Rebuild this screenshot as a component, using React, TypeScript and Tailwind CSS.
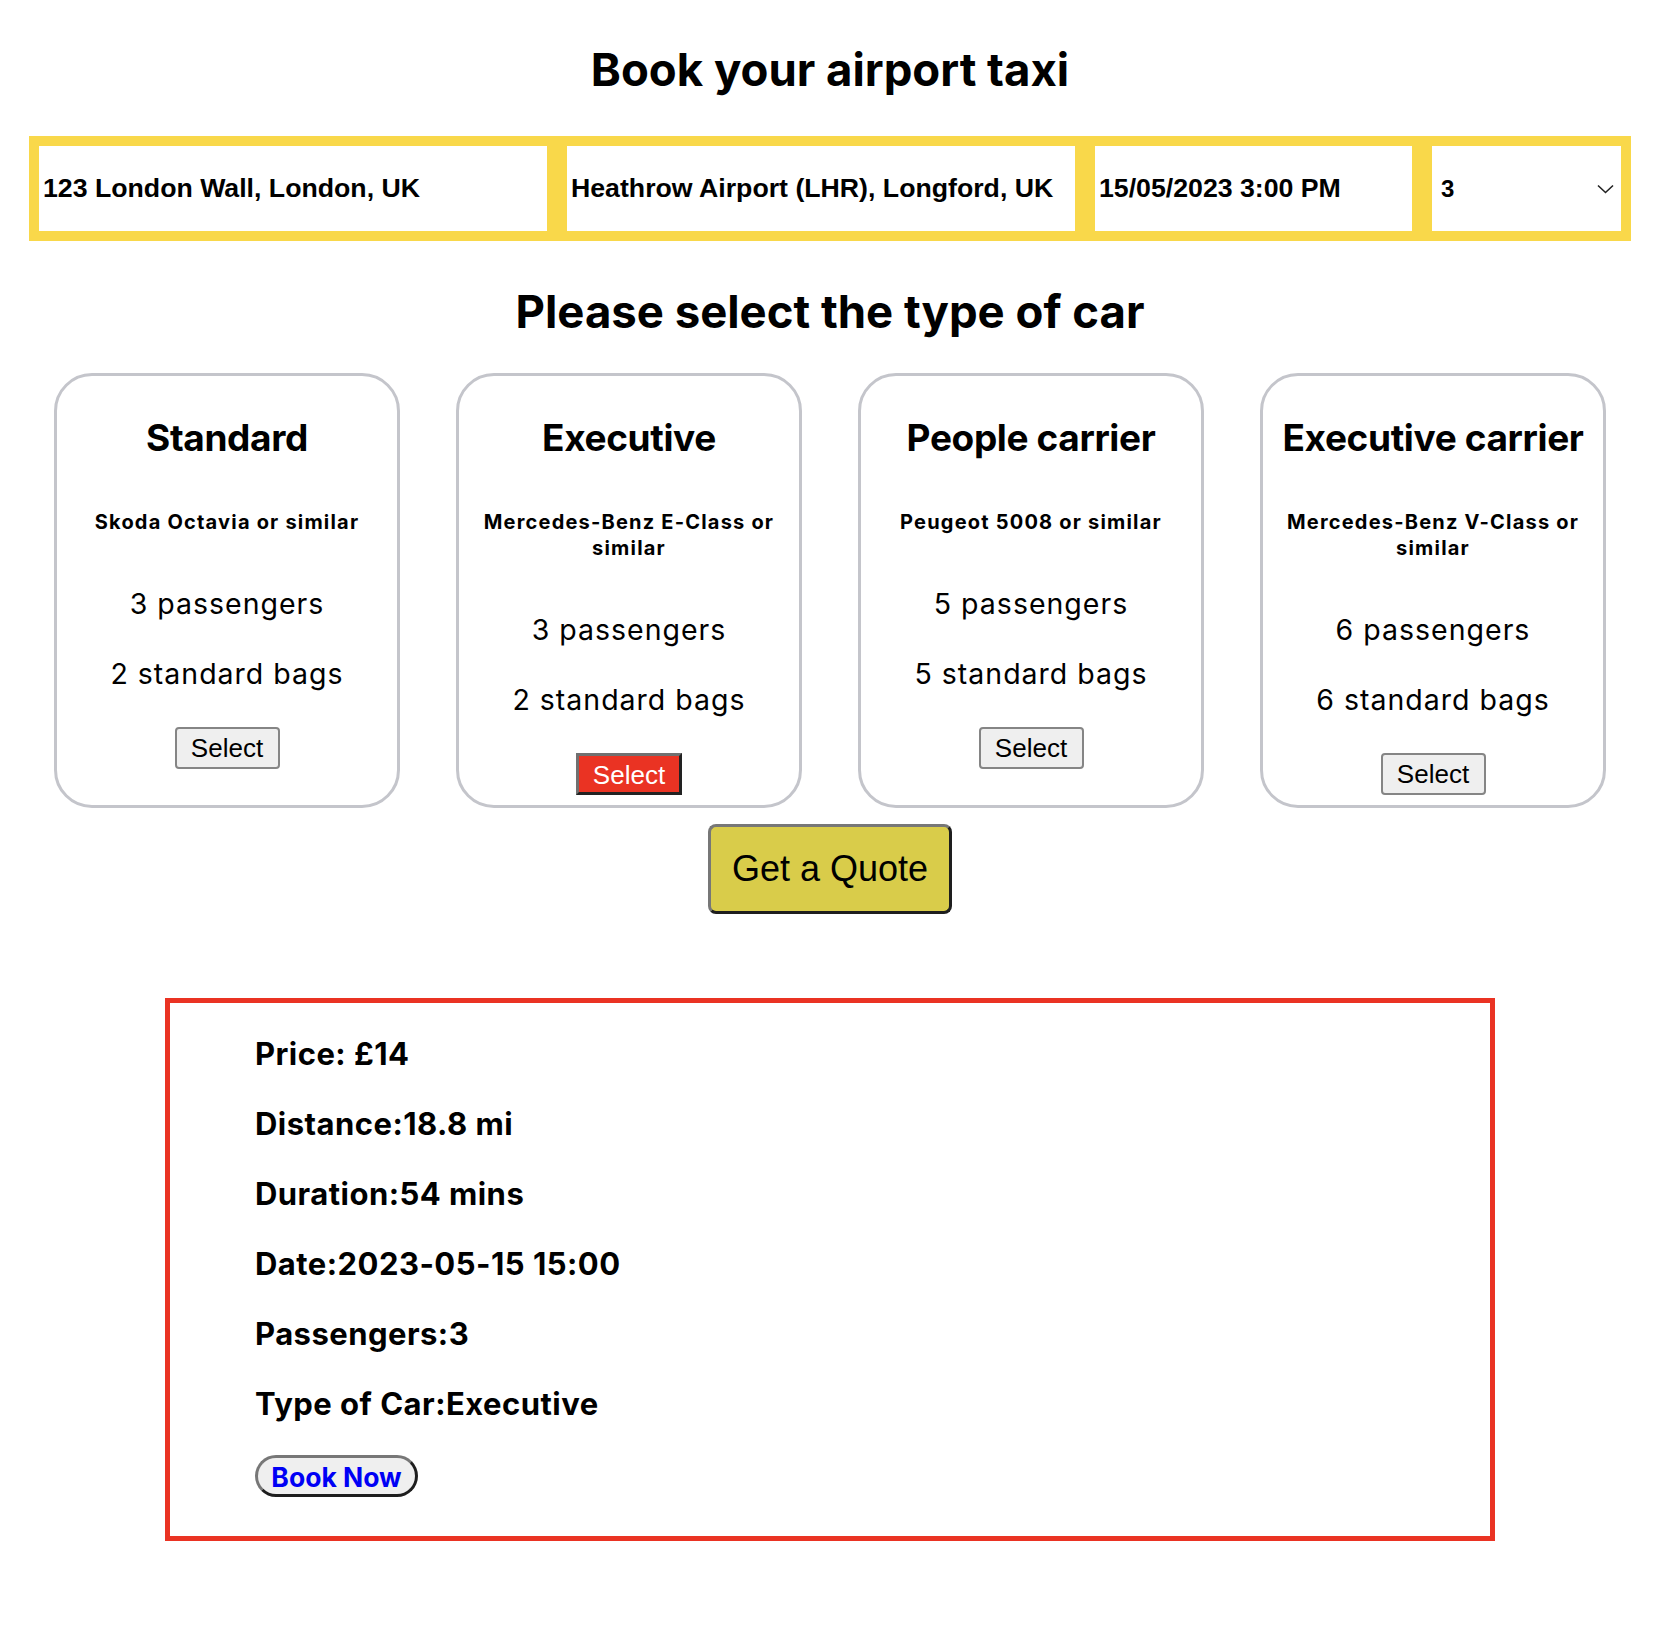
import { useState } from 'react'

interface Car {
  name: string
  model: string
  passengers: number
  bags: number
}

const cars: Car[] = [
  { name: 'Standard', model: 'Skoda Octavia or similar', passengers: 3, bags: 2 },
  { name: 'Executive', model: 'Mercedes-Benz E-Class or similar', passengers: 3, bags: 2 },
  { name: 'People carrier', model: 'Peugeot 5008 or similar', passengers: 5, bags: 5 },
  { name: 'Executive carrier', model: 'Mercedes-Benz V-Class or similar', passengers: 6, bags: 6 },
]

const sans = "font-['Inter','Noto_Sans',sans-serif]"
const arial = "font-['Liberation_Sans','Arial',sans-serif]"

export default function App() {
  const [selected, setSelected] = useState('Executive')
  const [passengers, setPassengers] = useState('3')

  return (
    <div className={`min-h-screen bg-white pt-[30px] pb-[100px] text-black ${sans}`}>
      <h1 className="text-center text-[45.5px] font-bold leading-[79px]">
        Book your airport taxi
      </h1>

      {/* Search bar */}
      <div className="mx-auto mt-[27px] flex w-[1602px] gap-[20px] bg-[#f9d84a] px-[10px] py-[10px]">
        <input
          type="text"
          defaultValue="123 London Wall, London, UK"
          className={`h-[85px] w-[508px] bg-white px-[4px] text-[26.7px] font-bold outline-none ${arial}`}
        />
        <input
          type="text"
          defaultValue="Heathrow Airport (LHR), Longford, UK"
          className={`h-[85px] w-[508px] bg-white px-[4px] text-[26.7px] font-bold outline-none ${arial}`}
        />
        <input
          type="text"
          defaultValue="15/05/2023 3:00 PM"
          className={`h-[85px] w-[317px] bg-white px-[4px] text-[26.7px] font-bold outline-none ${arial}`}
        />
        <div className="relative h-[85px] flex-1 bg-white">
          <select
            value={passengers}
            onChange={(e) => setPassengers(e.target.value)}
            className={`h-full w-full appearance-none bg-transparent pl-[9px] text-[24px] font-bold outline-none ${arial}`}
          >
            {[1, 2, 3, 4, 5, 6, 7, 8].map((n) => (
              <option key={n} value={n}>
                {n}
              </option>
            ))}
          </select>
          <svg
            className="pointer-events-none absolute right-[7px] top-[38px]"
            width="17"
            height="10"
            viewBox="0 0 17 10"
            fill="none"
          >
            <path d="M1 1.5L8.5 8.5L16 1.5" stroke="#222" strokeWidth="1.6" />
          </svg>
        </div>
      </div>

      <h2 className="mt-[41px] text-center text-[45.5px] font-bold leading-[60px]">
        Please select the type of car
      </h2>

      {/* Car types */}
      <div className="mx-auto mt-[31px] flex w-[1552px] gap-[56px]">
        {cars.map((car) => (
          <div
            key={car.name}
            className="flex w-[346px] flex-col items-center rounded-[38px] border-[3px] border-[#c4c5cb] px-[14px] pt-[40px] pb-[10px] text-center"
          >
            <h3 className="text-[37px] font-bold leading-[44px] tracking-[-0.01em]">{car.name}</h3>
            <h4 className="mt-[49px] text-[20px] font-bold leading-[26px] tracking-[0.06em]">
              {car.model}
            </h4>
            <p className="mt-[51px] text-[28.5px] leading-[36px] tracking-[0.035em]">
              {car.passengers} passengers
            </p>
            <p className="mt-[34px] text-[28.5px] leading-[36px] tracking-[0.035em]">
              {car.bags} standard bags
            </p>
            {selected === car.name ? (
              <button
                onClick={() => setSelected(car.name)}
                className={`mt-[35px] h-[42px] w-[106px] border-[3px] border-t-[#707070] border-l-[#707070] border-r-[#222] border-b-[#222] bg-[#ea3323] text-[26px] text-white ${arial}`}
              >
                Select
              </button>
            ) : (
              <button
                onClick={() => setSelected(car.name)}
                className={`mt-[35px] h-[42px] w-[105px] rounded-[4px] border-2 border-[#858585] bg-[#efefef] text-[26px] ${arial}`}
              >
                Select
              </button>
            )}
          </div>
        ))}
      </div>

      <div className="mt-[16px] flex justify-center">
        <button
          className={`h-[90px] w-[244px] rounded-[8px] border-[3px] border-t-[#777] border-l-[#777] border-r-[#1e1e1e] border-b-[#1e1e1e] bg-[#d9cc4a] text-[36px] ${arial}`}
        >
          Get a Quote
        </button>
      </div>

      {/* Quote */}
      <div className="mx-auto mt-[84px] w-[1330px] border-[5px] border-[#ea3323] pt-[16px] pb-[39px] pl-[85px]">
        <p className="text-[31px] font-bold leading-[70px] tracking-[0.015em]">Price: £14</p>
        <p className="text-[31px] font-bold leading-[70px] tracking-[0.015em]">Distance:18.8 mi</p>
        <p className="text-[31px] font-bold leading-[70px] tracking-[0.015em]">Duration:54 mins</p>
        <p className="text-[31px] font-bold leading-[70px] tracking-[0.015em]">Date:2023-05-15 15:00</p>
        <p className="text-[31px] font-bold leading-[70px] tracking-[0.015em]">Passengers:{passengers}</p>
        <p className="text-[31px] font-bold leading-[70px] tracking-[0.015em]">Type of Car:{selected}</p>
        <button className="mt-[16px] h-[42px] w-[163px] rounded-full border-[3px] border-t-[#777] border-l-[#777] border-r-[#1e1e1e] border-b-[#1e1e1e] bg-[#efefef] text-[26.5px] font-bold text-[#0000f5]">
          Book Now
        </button>
      </div>
    </div>
  )
}
